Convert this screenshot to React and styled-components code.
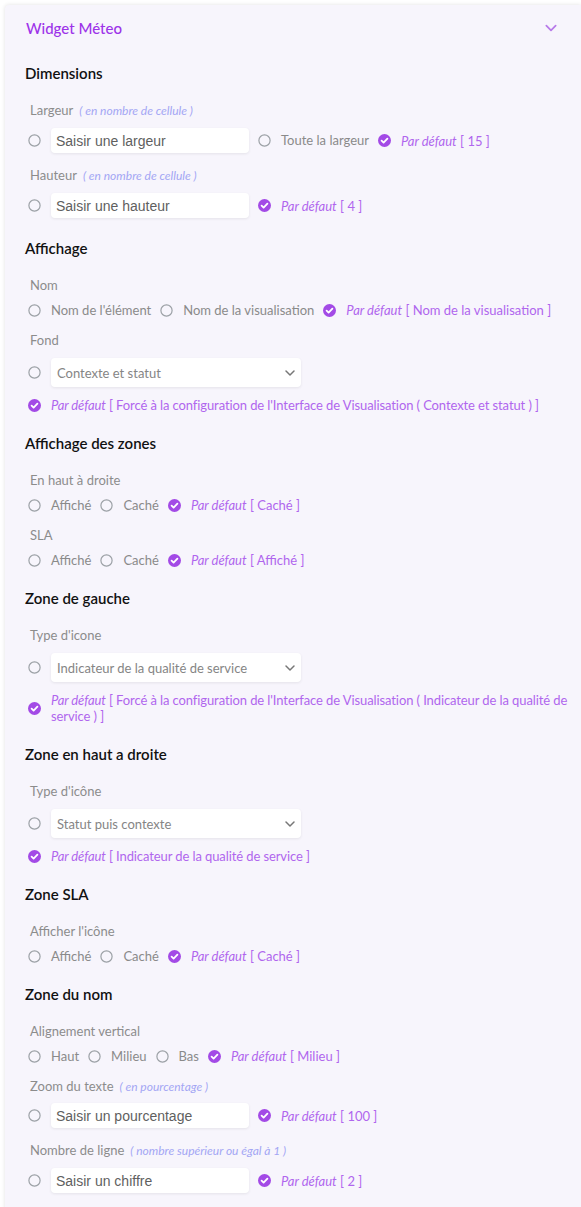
import React from "react";
import styled, { createGlobalStyle } from "styled-components";

const GlobalStyle = createGlobalStyle`
  body {
    margin: 0;
    background: #ffffff;
    font-family: "Lato", "Noto Sans", sans-serif;
    overflow: hidden;
  }
`;

const Page = styled.div`
  padding: 5px 0 0 5px;
  height: 1202px;
  overflow: hidden;
`;

const Card = styled.div`
  background: #f7f5fc;
  border-radius: 4px 0 0 0;
  box-shadow: 0 0 4px rgba(0, 0, 0, 0.12);
  padding: 0 0 40px 20px;
`;

const Header = styled.div`
  display: flex;
  align-items: center;
  justify-content: space-between;
  padding: 13px 23px 0 1px;
  height: 20px;
`;

const Title = styled.div`
  color: #9d33e9;
  font-size: 15px;
  line-height: 20px;
  font-weight: 500;
`;

const Section = styled.div`
  margin-top: ${(p) => (p.$first ? "25px" : "20px")};
`;

const SectionTitle = styled.div`
  color: #111;
  font-size: 15px;
  font-weight: 600;
  line-height: 20px;
  height: 20px;
  margin-bottom: 18px;
`;

const Field = styled.div`
  padding-left: 4px;
  & + & {
    margin-top: 13px;
  }
`;

const Label = styled.div`
  color: #8c8c8c;
  font-size: 13px;
  line-height: 18px;
  height: 18px;
  margin-bottom: ${(p) => (p.$tight ? "8px" : "9px")};
  padding-left: 1px;
  white-space: nowrap;
`;

const Hint = styled.span`
  color: #a3a6f4;
  font-size: 12px;
  font-style: italic;
  margin-left: 6px;
`;

const Row = styled.div`
  display: flex;
  align-items: center;
  gap: 10px;
  & + & {
    margin-top: 10px;
  }
`;

const Option = styled.div`
  display: flex;
  align-items: center;
  gap: 10px;
  color: #8a8a8a;
  font-size: 13px;
  line-height: 15px;
  min-height: 15px;
  white-space: nowrap;
`;

const DefaultOption = styled(Option)`
  color: #b066ee;
  line-height: 16px;
  white-space: ${(p) => (p.$wrap ? "normal" : "nowrap")};
  letter-spacing: ${(p) => (p.$wrap ? "-0.1px" : "normal")};
  em {
    font-style: italic;
  }
`;

const IconBox = styled.span`
  flex: none;
  width: 13px;
  height: 13px;
  display: inline-flex;
  margin-left: -1px;
`;

const TextInput = styled.input`
  width: 198px;
  height: 25px;
  box-sizing: border-box;
  border: none;
  border-radius: 4px;
  background: #fff;
  box-shadow: 0 1px 3px rgba(0, 0, 0, 0.08);
  padding: 0 5px;
  font-family: "Liberation Sans", Arial, sans-serif;
  font-size: 14px;
  outline: none;
  &::placeholder {
    color: #5f5f5f;
  }
`;

const Select = styled.div`
  width: 250px;
  height: 29px;
  box-sizing: border-box;
  border-radius: 4px;
  background: #fff;
  box-shadow: 0 1px 3px rgba(0, 0, 0, 0.08);
  display: flex;
  align-items: center;
  justify-content: space-between;
  padding: 0 5px 0 6px;
  color: #858585;
  font-size: 13px;
`;

const Radio = () => (
  <IconBox>
    <svg width="13" height="13" viewBox="0 0 13 13">
      <circle cx="6.5" cy="6.5" r="5.6" fill="none" stroke="#9ca1a6" strokeWidth="1.2" />
    </svg>
  </IconBox>
);

const Check = () => (
  <IconBox>
    <svg width="13" height="13" viewBox="0 0 13 13">
      <circle cx="6.5" cy="6.5" r="6.5" fill="#a34ae6" />
      <path d="M3.6 6.7 L5.6 8.6 L9.4 4.6" fill="none" stroke="#fff" strokeWidth="1.8" strokeLinecap="round" strokeLinejoin="round" />
    </svg>
  </IconBox>
);

const Chevron = ({ color = "#777", size = 12 }) => (
  <svg width={size} height={size} viewBox="0 0 12 12">
    <path d="M2 4 L6 8 L10 4" fill="none" stroke={color} strokeWidth="1.5" strokeLinecap="round" strokeLinejoin="round" />
  </svg>
);

const Default = ({ value, wrap }) => (
  <DefaultOption $wrap={wrap}>
    <Check />
    <span>
      <em>Par défaut</em> [ {value} ]
    </span>
  </DefaultOption>
);

const Opt = ({ children }) => (
  <Option>
    <Radio />
    {children}
  </Option>
);

const InputField = ({ label, hint, placeholder, extra, value, tight }) => (
  <Field>
    <Label $tight={tight}>
      {label}
      {hint && <Hint>( {hint} )</Hint>}
    </Label>
    <Row>
      <Radio />
      <TextInput placeholder={placeholder} />
      {extra && <Opt>{extra}</Opt>}
      <Default value={value} />
    </Row>
  </Field>
);

const ChoiceField = ({ label, options, value }) => (
  <Field>
    <Label $tight>{label}</Label>
    <Row>
      {options.map((o) => (
        <Opt key={o}>{o}</Opt>
      ))}
      <Default value={value} />
    </Row>
  </Field>
);

const SelectField = ({ label, selected, value }) => (
  <Field>
    <Label>{label}</Label>
    <Row>
      <Radio />
      <Select>
        <span>{selected}</span>
        <Chevron />
      </Select>
    </Row>
    <Row>
      <Default value={value} wrap />
    </Row>
  </Field>
);

export default function App() {
  return (
    <Page>
      <GlobalStyle />
      <Card>
        <Header>
          <Title>Widget Méteo</Title>
          <Chevron color="#b77ae9" size={14} />
        </Header>

        <Section $first>
          <SectionTitle>Dimensions</SectionTitle>
          <InputField label="Largeur" hint="en nombre de cellule" placeholder="Saisir une largeur" extra="Toute la largeur" value="15" />
          <InputField label="Hauteur" hint="en nombre de cellule" placeholder="Saisir une hauteur" value="4" />
        </Section>

        <Section>
          <SectionTitle>Affichage</SectionTitle>
          <ChoiceField label="Nom" options={["Nom de l'élément", "Nom de la visualisation"]} value="Nom de la visualisation" />
          <SelectField
            label="Fond"
            selected="Contexte et statut"
            value="Forcé à la configuration de l'Interface de Visualisation ( Contexte et statut )"
          />
        </Section>

        <Section>
          <SectionTitle>Affichage des zones</SectionTitle>
          <ChoiceField label="En haut à droite" options={["Affiché", "Caché"]} value="Caché" />
          <ChoiceField label="SLA" options={["Affiché", "Caché"]} value="Affiché" />
        </Section>

        <Section>
          <SectionTitle>Zone de gauche</SectionTitle>
          <SelectField
            label="Type d'icone"
            selected="Indicateur de la qualité de service"
            value="Forcé à la configuration de l'Interface de Visualisation ( Indicateur de la qualité de service )"
          />
        </Section>

        <Section>
          <SectionTitle>Zone en haut a droite</SectionTitle>
          <SelectField label="Type d'icône" selected="Statut puis contexte" value="Indicateur de la qualité de service" />
        </Section>

        <Section>
          <SectionTitle>Zone SLA</SectionTitle>
          <ChoiceField label="Afficher l'icône" options={["Affiché", "Caché"]} value="Caché" />
        </Section>

        <Section>
          <SectionTitle>Zone du nom</SectionTitle>
          <ChoiceField label="Alignement vertical" options={["Haut", "Milieu", "Bas"]} value="Milieu" />
          <InputField label="Zoom du texte" hint="en pourcentage" placeholder="Saisir un pourcentage" value="100" tight />
          <InputField label="Nombre de ligne" hint="nombre supérieur ou égal à 1" placeholder="Saisir un chiffre" value="2" />
        </Section>
      </Card>
    </Page>
  );
}
